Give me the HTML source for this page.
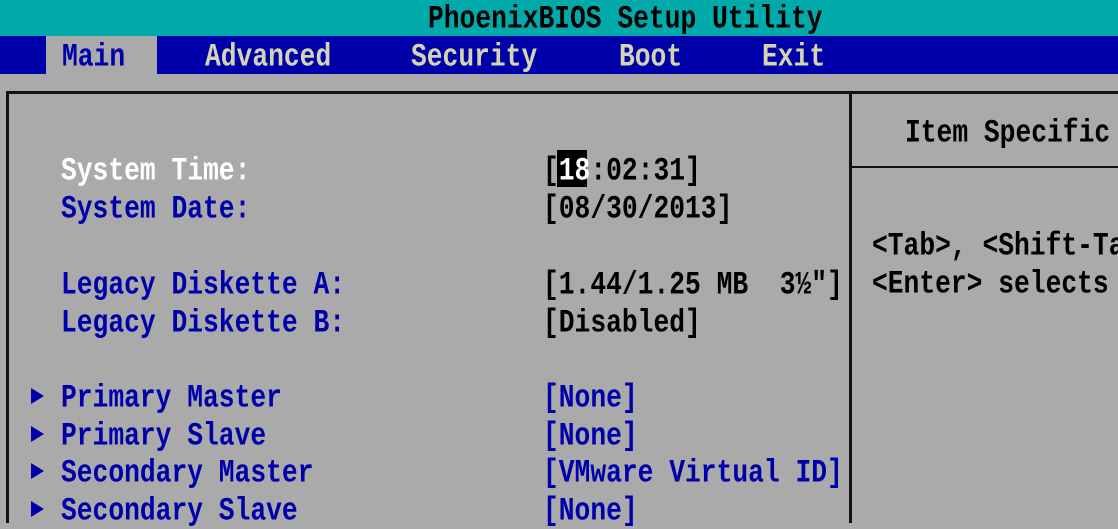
<!DOCTYPE html>
<html><head><style>
body{margin:0;width:1118px;height:523px;overflow:hidden;background:#aaaaaa;position:relative;font-family:"Liberation Mono",monospace;font-size:26.3px;font-weight:bold}
.t{position:absolute;white-space:pre;line-height:30px;transform:scaleY(1.22);transform-origin:0 50%}
.b{color:#0000aa}.w{color:#fff}.k{color:#000}.m{color:#d4d4b0}
.a{position:absolute;left:31px;width:0;height:0;border-top:8px solid transparent;border-bottom:8px solid transparent;border-left:13px solid #0000aa}
</style></head><body>
<div style="position:absolute;left:0;top:0;width:1118px;height:36px;background:#00aaaa"></div>
<div style="position:absolute;left:0;top:36px;width:1118px;height:38px;background:#0000aa"></div>
<div style="position:absolute;left:46px;top:36px;width:111px;height:38px;background:#aaaaaa"></div>
<div style="position:absolute;left:6px;top:91px;width:1112px;height:3px;background:#111"></div>
<div style="position:absolute;left:6px;top:91px;width:3px;height:432px;background:#111"></div>
<div style="position:absolute;left:849px;top:91px;width:3px;height:432px;background:#111"></div>
<div style="position:absolute;left:849px;top:166px;width:269px;height:2px;background:#111"></div>
<div style="position:absolute;left:557px;top:150px;width:30px;height:37px;background:#000"></div>

<div class="t k" style="left:428px;top:4px">PhoenixBIOS Setup Utility</div>
<div class="t b" style="left:62px;top:42px">Main</div>
<div class="t m" style="left:205px;top:42px">Advanced</div>
<div class="t m" style="left:411px;top:42px">Security</div>
<div class="t m" style="left:619px;top:42px">Boot</div>
<div class="t m" style="left:762px;top:42px">Exit</div>

<div class="t w" style="left:61px;top:156px">System Time:</div>
<div class="t b" style="left:61px;top:194px">System Date:</div>
<div class="t b" style="left:61px;top:270px">Legacy Diskette A:</div>
<div class="t b" style="left:61px;top:308px">Legacy Diskette B:</div>
<div class="a" style="top:388px"></div>
<div class="a" style="top:426px"></div>
<div class="a" style="top:463px"></div>
<div class="a" style="top:501px"></div>
<div class="t b" style="left:61px;top:383px">Primary Master</div>
<div class="t b" style="left:61px;top:421px">Primary Slave</div>
<div class="t b" style="left:61px;top:458px">Secondary Master</div>
<div class="t b" style="left:61px;top:496px">Secondary Slave</div>

<div class="t k" style="left:543px;top:156px">[<span style="color:#fff">18</span>:02:31]</div>
<div class="t k" style="left:543px;top:194px">[08/30/2013]</div>
<div class="t k" style="left:543px;top:270px">[1.44/1.25 MB  3½"]</div>
<div class="t k" style="left:543px;top:308px">[Disabled]</div>
<div class="t b" style="left:543px;top:383px">[None]</div>
<div class="t b" style="left:543px;top:421px">[None]</div>
<div class="t b" style="left:543px;top:458px">[VMware Virtual ID]</div>
<div class="t b" style="left:543px;top:496px">[None]</div>

<div class="t k" style="left:905px;top:118px">Item Specific</div>
<div class="t k" style="left:872px;top:231px">&lt;Tab&gt;, &lt;Shift-Tab&gt;</div>
<div class="t k" style="left:872px;top:269px">&lt;Enter&gt; selects</div>
</body></html>
